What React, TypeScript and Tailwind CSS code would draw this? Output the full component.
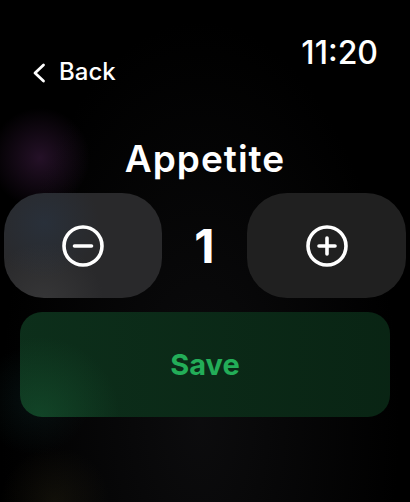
import React from "react";

function MinusIcon() {
  return (
    <svg width="44" height="44" viewBox="0 0 44 44" fill="none">
      <circle cx="22" cy="22" r="19" stroke="white" strokeWidth="3.6" />
      <line x1="13.5" y1="22" x2="30.5" y2="22" stroke="white" strokeWidth="3.6" strokeLinecap="round" />
    </svg>
  );
}

function PlusIcon() {
  return (
    <svg width="44" height="44" viewBox="0 0 44 44" fill="none">
      <circle cx="22" cy="22" r="19" stroke="white" strokeWidth="3.6" />
      <line x1="14" y1="22" x2="30" y2="22" stroke="white" strokeWidth="3.6" strokeLinecap="round" />
      <line x1="22" y1="14" x2="22" y2="30" stroke="white" strokeWidth="3.6" strokeLinecap="round" />
    </svg>
  );
}

export default function App() {
  return (
    <div
      className="w-[410px] h-[502px] overflow-hidden bg-black text-white flex flex-col bg-[radial-gradient(circle_at_40px_158px,rgba(120,55,130,0.3),transparent_50px),radial-gradient(circle_at_35px_400px,rgba(30,90,90,0.16),transparent_55px),radial-gradient(circle_at_55px_502px,rgba(90,80,40,0.16),transparent_55px),radial-gradient(ellipse_at_200px_420px,rgba(40,40,45,0.3),transparent_200px)]"
      style={{ fontFamily: "Inter, 'Noto Sans', sans-serif" }}
    >
      <div className="flex justify-between items-start px-[32px]">
        <div className="mt-[60px] flex items-center gap-[13px] text-[24px] leading-none font-medium">
          <svg width="14" height="20" viewBox="0 0 14 20" fill="none" className="mt-[1px]">
            <polyline points="11.5,2 3,10 11.5,18" stroke="white" strokeWidth="2.8" strokeLinecap="round" strokeLinejoin="round" />
          </svg>
          <span>Back</span>
        </div>
        <div className="mt-[37px] text-[32px] leading-none font-medium">11:20</div>
      </div>

      <div className="mt-[56px] text-center text-[37px] leading-none font-semibold tracking-[1px]">Appetite</div>

      <div className="mt-[16px] flex items-center px-[4px]">
        <div className="w-[158px] h-[105px] rounded-[40px] flex items-center justify-center bg-[#29292b] bg-[radial-gradient(circle_at_40px_30px,rgba(40,60,85,0.35),transparent_55px),radial-gradient(circle_at_40px_110px,rgba(75,75,75,0.4),transparent_60px)]">
          <MinusIcon />
        </div>
        <div className="flex-1 text-center text-[47px] leading-none font-bold">1</div>
        <div className="w-[159px] h-[105px] rounded-[40px] flex items-center justify-center bg-[#202020]">
          <PlusIcon />
        </div>
      </div>

      <div className="mt-[14px] mx-[20px] h-[105px] rounded-[22px] flex items-center justify-center bg-[#0a2615] bg-[radial-gradient(circle_at_20px_105px,rgba(25,95,55,0.45),transparent_80px),linear-gradient(90deg,rgba(15,55,32,0.5),rgba(5,30,15,0.2))]">
        <span className="text-[29px] leading-none font-bold text-[#23ad58]">Save</span>
      </div>
    </div>
  );
}
